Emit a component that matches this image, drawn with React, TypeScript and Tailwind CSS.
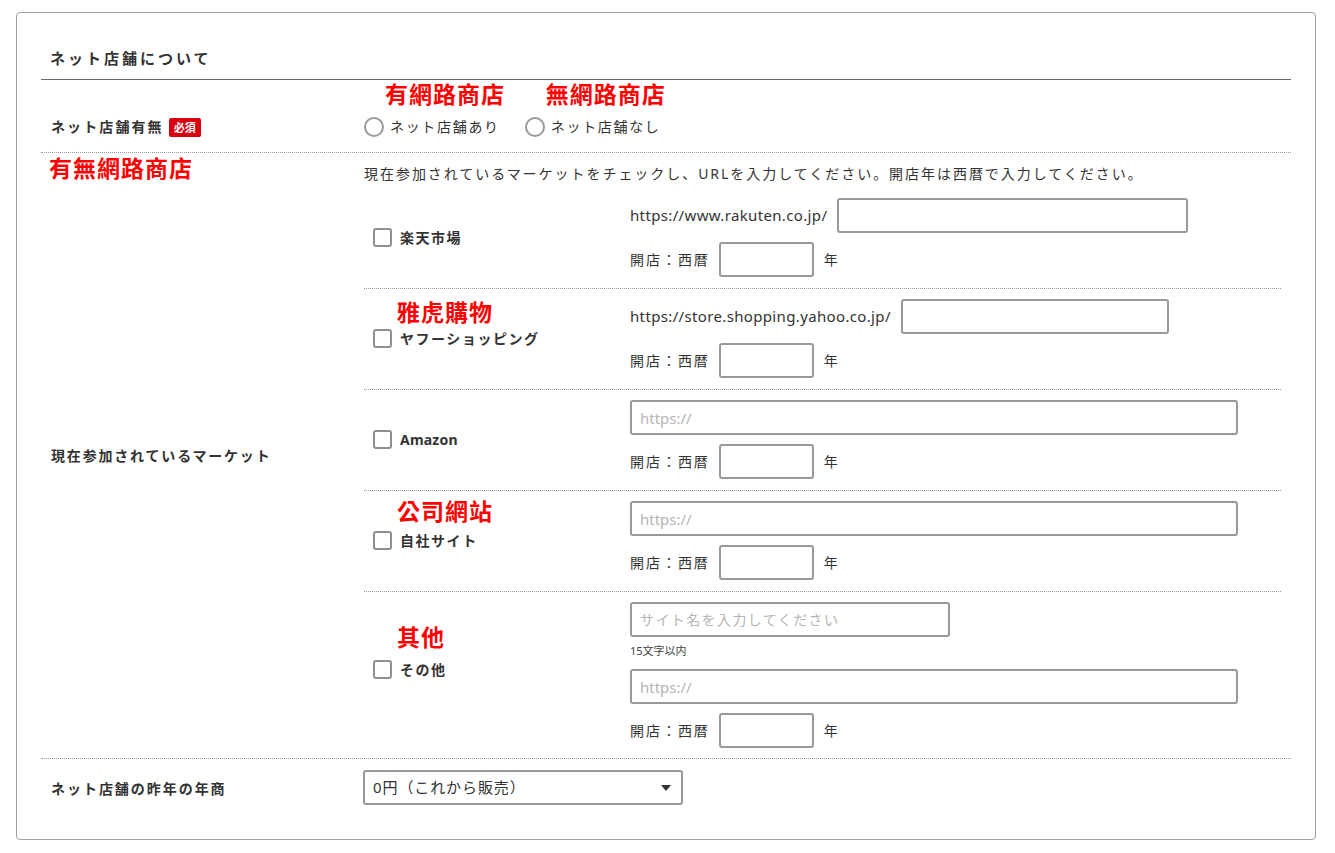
import React from 'react';

const font = "font-['Noto_Sans','Noto_Sans_CJK_JP',sans-serif]";

// 赤い注釈（スクリーンショット上の書き込み）
function Note({ text, className }: { text: string; className: string }) {
  return (
    <span
      className={`absolute whitespace-nowrap text-[23px] leading-[24px] tracking-[1px] font-bold text-[#ff0000] font-['Noto_Sans_CJK_TC',sans-serif] ${className}`}
    >
      {text}
    </span>
  );
}

function Checkbox({ label, latin }: { label: string; latin?: boolean }) {
  return (
    <label className="flex items-center gap-[8px]">
      <span className="w-[19px] h-[19px] border-2 border-[#8f8f8f] rounded-[3px] bg-white" />
      <span className={`text-[14px] font-bold text-[#333] ${latin ? 'tracking-[0.2px]' : 'tracking-[0.11em]'}`}>
        {label}
      </span>
    </label>
  );
}

function Radio({ label, note }: { label: string; note: string }) {
  return (
    <label className="relative flex items-center gap-[6px]">
      <span className="w-[20px] h-[20px] rounded-full border-2 border-[#999] bg-white" />
      <span className="text-[14px] leading-[20px] tracking-[0.12em] text-[#333]">{label}</span>
      <Note text={note} className="left-[21px] top-[-36px]" />
    </label>
  );
}

function YearRow() {
  return (
    <div className="flex items-center h-[35px] text-[14px] text-[#333]">
      <span className="tracking-[0.14em]">開店：西暦</span>
      <input className="ml-[9px] w-[95px] h-[35px] border-2 border-[#999] rounded-[3px] outline-none" />
      <span className="ml-[10px]">年</span>
    </div>
  );
}

function UrlRow({ prefix, placeholder, widthClass }: { prefix?: string; placeholder?: string; widthClass: string }) {
  return (
    <div className="flex items-center h-[35px] text-[15px] text-[#333]">
      {prefix && <span className="mr-[10px] tracking-[0.35px]">{prefix}</span>}
      <input
        placeholder={placeholder}
        className={`h-[35px] ${widthClass} border-2 border-[#999] rounded-[3px] px-[8px] text-[15px] placeholder:text-[#b5b5b5] outline-none`}
      />
    </div>
  );
}

function Market({
  name,
  latin,
  prefix,
  placeholder,
  widthClass,
  note,
  noteClass,
}: {
  name: string;
  latin?: boolean;
  prefix?: string;
  placeholder?: string;
  widthClass: string;
  note?: string;
  noteClass?: string;
}) {
  return (
    <div className="relative flex items-center border-b border-dotted border-[#999] pt-[10px] pb-[11px]">
      {note && <Note text={note} className={noteClass || ''} />}
      <div className="w-[266px] pl-[9px]">
        <Checkbox label={name} latin={latin} />
      </div>
      <div className="flex flex-col gap-[9px]">
        <UrlRow prefix={prefix} placeholder={placeholder} widthClass={widthClass} />
        <YearRow />
      </div>
    </div>
  );
}

export default function App() {
  return (
    <div className={`min-h-screen bg-white pt-[12px] ${font}`}>
      <div className="ml-[16px] w-[1300px] border border-[#a0a0a0] rounded-[4px] px-[24px] pb-[23px]">
        {/* 見出し */}
        <div className="pt-[35px] pb-[11px] border-b border-[#6a6a6a] pl-[9px]">
          <h2 className="text-[15px] leading-[20px] font-bold tracking-[0.2em] text-[#333]">ネット店舗について</h2>
        </div>

        {/* ネット店舗有無 */}
        <div className="flex items-center border-b border-dotted border-[#999] pt-[37px] pb-[15px]">
          <div className="w-[323px] pl-[10px] flex items-center">
            <span className="text-[14px] leading-[20px] font-bold tracking-[0.15em] text-[#333]">ネット店舗有無</span>
            <span className="ml-[5px] h-[19px] px-[5px] rounded-[2px] bg-[#d8000f] text-white text-[11px] font-bold leading-[19px]">
              必須
            </span>
          </div>
          <div className="flex items-center gap-[25px]">
            <Radio label="ネット店舗あり" note="有網路商店" />
            <Radio label="ネット店舗なし" note="無網路商店" />
          </div>
        </div>

        {/* 現在参加されているマーケット */}
        <div className="flex items-stretch border-b border-dotted border-[#999]">
          <div className="relative w-[323px] pl-[10px] flex items-center">
            <Note text="有無網路商店" className="left-[8px] top-[2px]" />
            <span className="text-[14px] font-bold tracking-[0.13em] text-[#333]">現在参加されているマーケット</span>
          </div>
          <div className="flex-1 pr-[10px]">
            <p className="pt-[11px] mb-[4px] text-[14px] leading-[20px] tracking-[0.14em] text-[#333]">
              現在参加されているマーケットをチェックし、URLを入力してください。開店年は西暦で入力してください。
            </p>
            <Market name="楽天市場" prefix="https://www.rakuten.co.jp/" widthClass="w-[351px]" />
            <Market
              name="ヤフーショッピング"
              prefix="https://store.shopping.yahoo.co.jp/"
              widthClass="w-[268px]"
              note="雅虎購物"
              noteClass="left-[33px] top-[10px]"
            />
            <Market name="Amazon" latin placeholder="https://" widthClass="w-[608px]" />
            <Market
              name="自社サイト"
              placeholder="https://"
              widthClass="w-[608px]"
              note="公司網站"
              noteClass="left-[33px] top-[7px]"
            />

            {/* その他 */}
            <div className="relative flex items-center pt-[10px] pb-[10px]">
              <Note text="其他" className="left-[33px] top-[32px]" />
              <div className="w-[266px] pl-[9px] mb-[12px]">
                <Checkbox label="その他" />
              </div>
              <div className="flex flex-col">
                <input
                  placeholder="サイト名を入力してください"
                  className="h-[35px] w-[320px] border-2 border-[#999] rounded-[3px] px-[8px] text-[14px] tracking-[0.1em] placeholder:text-[#b5b5b5] outline-none"
                />
                <span className="mt-[6px] mb-[10px] text-[11px] leading-[16px] text-[#444]">15文字以内</span>
                <UrlRow placeholder="https://" widthClass="w-[608px]" />
                <div className="mt-[9px]">
                  <YearRow />
                </div>
              </div>
            </div>
          </div>
        </div>

        {/* ネット店舗の昨年の年商 */}
        <div className="flex items-center pt-[11px] pb-[11px]">
          <div className="w-[322px] pl-[10px]">
            <span className="text-[14px] font-bold tracking-[0.14em] text-[#333]">ネット店舗の昨年の年商</span>
          </div>
          <div className="relative w-[320px] h-[35px] border-2 border-[#999] rounded-[3px] flex items-center pl-[8px] text-[15px] tracking-[0.06em] text-[#333]">
            <span>0円（これから販売）</span>
            <svg className="absolute right-[10px] top-[13px]" width="10" height="6" viewBox="0 0 10 6">
              <path d="M0 0 L10 0 L5 6 Z" fill="#333" />
            </svg>
          </div>
        </div>
      </div>
    </div>
  );
}
